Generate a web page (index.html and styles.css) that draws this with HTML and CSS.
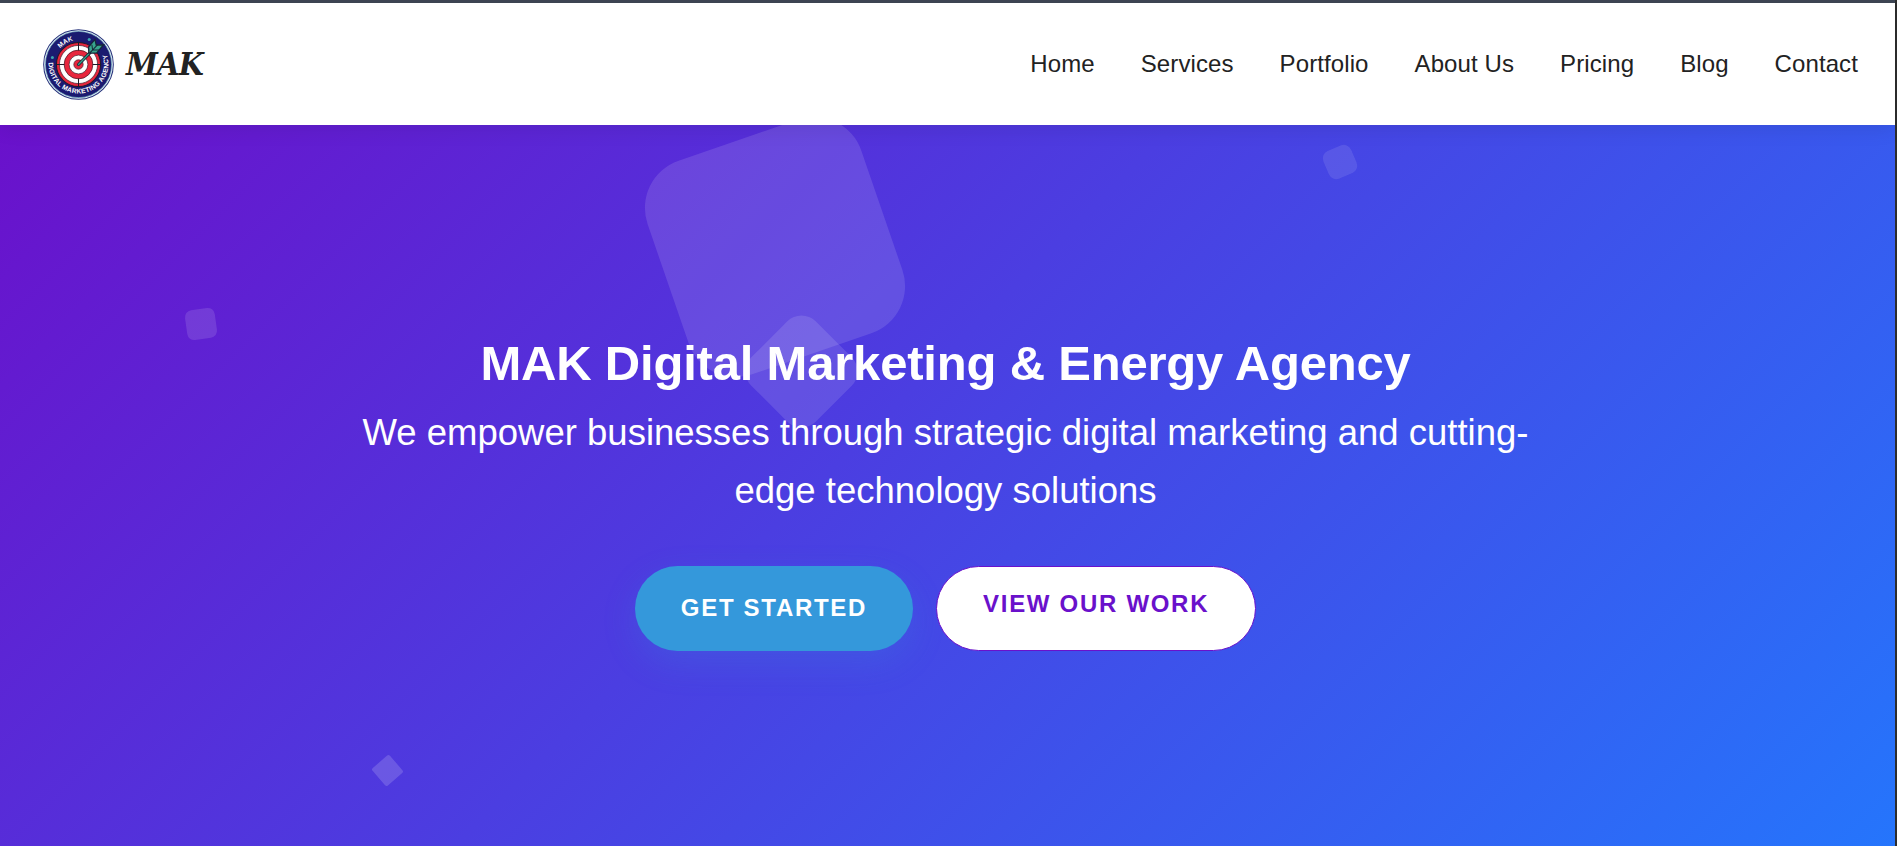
FILE: index.html
```html
<!DOCTYPE html>
<html lang="en">
<head>
<meta charset="utf-8">
<title>MAK Digital Marketing &amp; Energy Agency</title>
<link rel="stylesheet" href="styles.css">
</head>
<body>
<div class="page">
  <header class="header">
    <a class="brand">
      <svg class="brand-logo" viewBox="0 0 212 212">
        <defs>
          <path id="arc-bottom" d="M16.500 100A89.500 89.500 0 0 0 195.500 106A89.500 89.500 0 0 0 150 28"/>
          <path id="arc-top" d="M33 106A73 73 0 0 1 179 106"/>
        </defs>
        <circle cx="106" cy="106" r="104" fill="#e8f3f8" stroke="#28347c" stroke-width="3"/>
        <circle cx="106" cy="106" r="99" fill="#1b1a70" stroke="#77b3c4" stroke-width="2"/>
        <circle cx="106" cy="106" r="66" fill="#e8263d" stroke="#201a28" stroke-width="3"/>
        <circle cx="106" cy="106" r="57" fill="#fff" stroke="#3b1c28" stroke-width="2"/>
        <circle cx="106" cy="106" r="43" fill="#e8263d" stroke="#3b1c28" stroke-width="2"/>
        <circle cx="106" cy="106" r="28" fill="#fff" stroke="#3b1c28" stroke-width="2"/>
        <circle cx="106" cy="106" r="14" fill="#e8263d" stroke="#3b1c28" stroke-width="2"/>
        <path d="M106 38v26M106 148v26M38 106h26M148 106h26" stroke="#201a28" stroke-width="3"/>
        <path d="M106 106L148 63" stroke="#17263a" stroke-width="9" stroke-linecap="round"/>
        <path d="M106 106L148 63" stroke="#38a68d" stroke-width="4" stroke-linecap="round"/>
        <path d="M137 72L136 54L155 31L159 48L181 47L160 72Z" fill="#38a68d" stroke="#17263a" stroke-width="4"/>
        <path d="M140 71L164 46M146 47L148 62L167 63" fill="none" stroke="#17263a" stroke-width="3"/>
        <circle cx="138" cy="31" r="4.500" fill="#39a4ae"/>
        <circle cx="28" cy="85" r="4.500" fill="#39a4ae"/>
        <text class="seal-text"><textPath href="#arc-bottom" textLength="312">DIGITAL MARKETING AGENCY</textPath></text>
        <text class="seal-text"><textPath href="#arc-top" startOffset="53" textLength="45">MAK</textPath></text>
      </svg>
      <span class="brand-name">MAK</span>
    </a>
    <nav class="nav">
      <a>Home</a><a>Services</a><a>Portfolio</a><a>About Us</a><a>Pricing</a><a>Blog</a><a>Contact</a>
    </nav>
  </header>
  <main class="hero">
    <div class="shape shape-large"></div>
    <div class="shape shape-diamond"></div>
    <div class="shape shape-left"></div>
    <div class="shape shape-bottom"></div>
    <div class="shape shape-right"></div>
    <div class="hero-content">
      <h1 class="title">MAK Digital Marketing &amp; Energy Agency</h1>
      <p class="subtitle">We empower businesses through strategic digital marketing and cutting-<br>edge technology solutions</p>
      <div class="actions">
        <a class="btn btn-primary">GET STARTED</a>
        <a class="btn btn-secondary">VIEW OUR WORK</a>
      </div>
    </div>
  </main>
</div>
</body>
</html>
```
FILE: styles.css
```css
* { box-sizing: border-box; }
body {
  margin: 0;
  height: 846px;
  overflow: hidden;
  font-family: "Liberation Sans", Arial, sans-serif;
  background: #2d2d2d;
}
.page {
  height: 846px;
  border-top: 3px solid #3f4755;
  margin-right: 2px;
  display: flex;
  flex-direction: column;
}
.header {
  position: relative;
  z-index: 2;
  height: 122px;
  flex: none;
  display: flex;
  align-items: center;
  justify-content: space-between;
  padding: 0 37px 0 43px;
  background: #fff;
  box-shadow: 0 2px 20px rgba(0, 0, 0, .1);
}
.brand { display: flex; align-items: center; gap: 12px; }
.brand-logo { width: 71px; height: 71px; display: block; }
.seal-text {
  font: bold 20px "Liberation Sans", Arial, sans-serif;
  fill: #fff;
}
.brand-name {
  font: italic bold 32px "DejaVu Serif Condensed", "DejaVu Serif", serif;
  font-stretch: condensed;
  letter-spacing: -.7px;
  color: #222;
}
.nav { display: flex; gap: 46px; font-size: 24px; line-height: 28px; letter-spacing: .1px; color: #222; }
.hero {
  position: relative;
  flex: 1;
  overflow: hidden;
  background: linear-gradient(135deg, #6a11cb 0%, #2575fc 100%);
  color: #fff;
}
.hero-content {
  position: relative;
  display: flex;
  flex-direction: column;
  align-items: center;
  padding: 209px 4px 0 0;
  text-align: center;
}
.title { margin: 0; font-size: 49px; line-height: 58px; letter-spacing: -.2px; white-space: nowrap; }
.subtitle { margin: 12px 0 0; font-size: 36.5px; line-height: 58px; white-space: nowrap; }
.actions { display: flex; gap: 23px; margin-top: 46px; }
.btn {
  height: 85px;
  padding: 0 46px;
  border-radius: 43px;
  font-size: 24px;
  font-weight: bold;
  letter-spacing: 1.7px;
}
.btn-primary {
  background: #3498db;
  line-height: 83px;
  box-shadow: 0 12px 34px rgba(52, 152, 219, .2);
}
.btn-secondary {
  background: #fff;
  border: 1px solid #6a11cb;
  color: #6a11cb;
  line-height: 73px;
}
.shape { position: absolute; background: rgba(255, 255, 255, .12); }
.shape-large { left: 662px; top: 9px; width: 226px; height: 226px; border-radius: 50px; transform: rotate(-19deg); }
.shape-diamond { left: 756px; top: 201px; width: 91px; height: 91px; border-radius: 20px; transform: rotate(45deg); }
.shape-left { left: 186px; top: 184px; width: 30px; height: 30px; border-radius: 7px; transform: rotate(-8deg); }
.shape-bottom { left: 376px; top: 634px; width: 23px; height: 23px; border-radius: 2px; transform: rotate(-41deg); background: rgba(255, 255, 255, .16); }
.shape-right { left: 1325px; top: 22px; width: 30px; height: 30px; border-radius: 8px; transform: rotate(-23deg); background: rgba(255, 255, 255, .1); }
```
